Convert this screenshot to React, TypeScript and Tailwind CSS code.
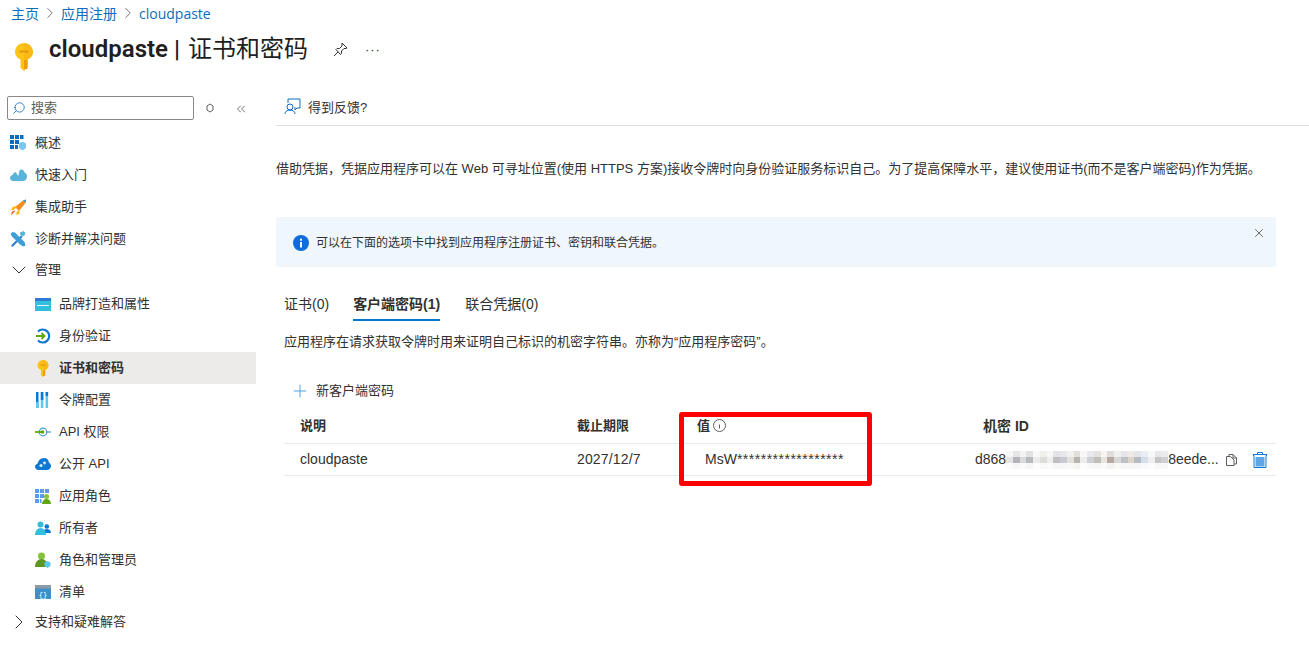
import React from 'react';
import { ChevronDown, ChevronRight, ChevronsLeft, Plus, Search, X } from 'lucide-react';

const font = "font-['Liberation_Sans','Noto_Sans_CJK_SC',sans-serif]";

function Key({ w = 18, h = 28 }: { w?: number; h?: number }) {
  return (
    <svg width={w} height={h} viewBox="0 0 18 28">
      <path d="M9 0 C14 0 18 4 18 9 C18 12.500 15.800 15 12.500 16.500 V23.500 L9 28 L5.500 25 V16.500 C2.200 15 0 12.500 0 9 C0 4 4 0 9 0 Z" fill="#fcc419" />
      <path d="M9 0 C14 0 18 4 18 9 C18 12.500 15.800 15 12.500 16.500 V23.500 L9 28 V0 Z" fill="#f8ae12" opacity="0.5" />
      <rect x="4.500" y="7.500" width="9" height="2" fill="#e59a0c" />
      <rect x="9" y="17" width="3.500" height="9" fill="#ee9b0e" />
    </svg>
  );
}

function NavIcon({ name }: { name: string }) {
  if (name === 'grid')
    return (
      <svg width="16" height="16" viewBox="0 0 16 16">
        <path d="M0 0h4v4H0zM5 0h4v4H5zM10 0h3.500v4H10zM0 5h4v4H0zM5 5h4v4H5zM0 10h4v4H0zM5 10h3v4H5z" fill="#0f6cbd" />
        <path d="M9 8.500l3.500-2 3.500 2v4.500l-3.500 2.500L9 13z" fill="#83c4ea" />
      </svg>
    );
  if (name === 'cloud')
    return (
      <svg width="17" height="12" viewBox="0 0 17 12">
        <path d="M3.500 12C1.500 12 0 10.700 0 9c0-1.600 1.200-2.800 2.800-3C3.200 4 4.500 3 6 3.500L8.200 7l1.500-6c2-1.200 4.300-.2 4.800 2.500 1.500.5 2.500 2 2.500 3.800C17 10 15.500 12 13.500 12z" fill="#59b4d9" />
      </svg>
    );
  if (name === 'rocket')
    return (
      <svg width="17" height="17" viewBox="0 0 17 17">
        <path d="M5 8L13 1.500 16 0.500 15.500 4 9 12z" fill="#f78d1e" />
        <path d="M13 1.500 16 .5 15.500 4z" fill="#3e94d6" />
        <path d="M3 7.500h4L4 11H1zM9.500 10.500v4L6.500 16.500V13z" fill="#fcb913" />
        <path d="M5.500 11.500L1 16.500l1-4z" fill="#f05a28" />
      </svg>
    );
  if (name === 'tools')
    return (
      <svg width="16" height="16" viewBox="0 0 16 16">
        <path d="M1 14.500L11 4.500l1.500 1.500L2.500 16z" fill="#2b7cd3" />
        <path d="M10 1.500L13.500 0 15.500 2 14.500 4.500 12 5.500 10.500 4z" fill="#59b4d9" />
        <path d="M0.500 3L2.500 1 5 1.500 14.500 11l1 3.500-2 1-3-1.500L2 5.500z" fill="#3d9fd8" />
      </svg>
    );
  if (name === 'brand')
    return (
      <svg width="16" height="13" viewBox="0 0 16 13">
        <rect width="16" height="13" fill="#32bedd" />
        <rect width="16" height="3" fill="#2b7cd3" />
        <rect x="2" y="7" width="12" height="1" fill="#e5f6fb" />
      </svg>
    );
  if (name === 'auth')
    return (
      <svg width="16" height="16" viewBox="0 0 16 16" fill="none">
        <path d="M3 3.500A6.500 6.500 0 1 1 3 12.500" stroke="#0f78d4" strokeWidth="2.200" />
        <path d="M1 8h8M6.500 5l3 3-3 3" stroke="#5ea60b" strokeWidth="1.800" />
      </svg>
    );
  if (name === 'key') return <span className="pl-[2px]"><Key w={12} h={17} /></span>;
  if (name === 'bars')
    return (
      <svg width="14" height="16" viewBox="0 0 14 16">
        <rect x="1" width="2.500" height="16" fill="#0f78d4" />
        <rect x="1" y="10" width="2.500" height="6" fill="#5cc8ec" />
        <rect x="5.800" width="2.500" height="16" fill="#5cc8ec" />
        <rect x="5.800" width="2.500" height="8" fill="#0f78d4" />
        <rect x="10.600" width="2.500" height="16" fill="#5cc8ec" />
        <rect x="10.600" width="2.500" height="4" fill="#0f78d4" />
      </svg>
    );
  if (name === 'api')
    return (
      <svg width="16" height="10" viewBox="0 0 16 10" fill="none">
        <circle cx="8" cy="5" r="3.800" stroke="#3d9fd8" strokeWidth="1.200" />
        <path d="M11 5h5" stroke="#3d9fd8" strokeWidth="1.200" />
        <path d="M0 5h8" stroke="#5ea60b" strokeWidth="1.800" />
        <circle cx="7.500" cy="5" r="1.800" fill="#5ea60b" />
      </svg>
    );
  if (name === 'expose')
    return (
      <svg width="16" height="12" viewBox="0 0 16 12">
        <path d="M3.500 12C1.500 12 0 10.600 0 8.800 0 7.300 1 6.100 2.500 5.800 3 3 5.500 0 9 0c3 0 4.800 2 5 4.800 1.300.5 2 1.800 2 3.200 0 2.200-1.700 4-4 4z" fill="#0f78d4" />
        <circle cx="6" cy="7.500" r="1.600" fill="#d5eefa" />
        <circle cx="9.500" cy="5" r="1.400" fill="#d5eefa" />
      </svg>
    );
  if (name === 'roles')
    return (
      <svg width="16" height="15" viewBox="0 0 16 15">
        <path d="M0 0h4v4H0zM5 0h4v4H5zM10 0h4v4h-4zM0 5h4v4H0zM5 5h4v4H5zM0 10h4v4H0zM5 10h1.500v4H5z" fill="#5a9bed" />
        <circle cx="11.500" cy="7.500" r="2.500" fill="#86c33a" />
        <path d="M7 15c0-3 2-5 4.500-5s4.500 2 4.500 5z" fill="#5ea60b" />
      </svg>
    );
  if (name === 'owners')
    return (
      <svg width="16" height="14" viewBox="0 0 16 14">
        <circle cx="11.800" cy="5.500" r="2.300" fill="#0f78d4" />
        <path d="M8 12c0-2.500 1.700-4 3.800-4s4.200 1.500 4.200 4z" fill="#0f78d4" />
        <circle cx="5.500" cy="3.500" r="3" fill="#32bedd" />
        <path d="M0 14c0-4 2.500-7 5.500-7s5.500 3 5.500 7z" fill="#32bedd" />
      </svg>
    );
  if (name === 'admins')
    return (
      <svg width="16" height="16" viewBox="0 0 16 16">
        <circle cx="6.500" cy="4" r="3.500" fill="#86c33a" />
        <path d="M0 15c0-5 3-8 6.500-8s6.500 3 6.500 8z" fill="#5e9624" />
        <path d="M9.500 10.500l3-1.500 3 1.500v3.500l-3 2-3-2z" fill="#5cc8ec" />
      </svg>
    );
  if (name === 'manifest')
    return (
      <svg width="16" height="14" viewBox="0 0 16 14">
        <rect width="16" height="14" fill="#3d8fc9" />
        <rect width="16" height="3.500" fill="#8c9aa5" />
        <text x="8" y="11.500" textAnchor="middle" fontSize="7" fill="#ffffff" fontFamily="Liberation Mono">{'{}'}</text>
      </svg>
    );
  return null;
}

const navTop = [
  { label: '概述', icon: 'grid' },
  { label: '快速入门', icon: 'cloud' },
  { label: '集成助手', icon: 'rocket' },
  { label: '诊断并解决问题', icon: 'tools' },
];

const navSub = [
  { label: '品牌打造和属性', icon: 'brand' },
  { label: '身份验证', icon: 'auth' },
  { label: '证书和密码', icon: 'key', active: true },
  { label: '令牌配置', icon: 'bars' },
  { label: 'API 权限', icon: 'api' },
  { label: '公开 API', icon: 'expose' },
  { label: '应用角色', icon: 'roles' },
  { label: '所有者', icon: 'owners' },
  { label: '角色和管理员', icon: 'admins' },
  { label: '清单', icon: 'manifest' },
];

const blurMid = ['#e4e4e6', '#b4b5bc', '#dadada', '#b9babc', '#ebebe9', '#dcdcd8', '#eeeeee', '#c0bfc2', '#c9cad0', '#e2e1dd', '#b7b4ae', '#ececec', '#cfd0d5', '#c1bdb8', '#e8e5df', '#b6a9a4', '#d8d8d4', '#bfc0c6', '#ddd5ca', '#b7bac0', '#d5dfea', '#eeeeee', '#c4c4c7', '#cfcfd3'];
const blurTop = ['#f6f6f6', '#e6e6e9', '#f3f3f3', '#e2e2e5', '#f8f8f8', '#efefec', '#f7f7f7', '#e4e4e7', '#e8e8ec', '#f1f0ee', '#e1e0dc', '#f8f8f8', '#e8e9ec', '#e4e2df', '#f6f4f1', '#e2dcda', '#f0f0ee', '#e5e6e9', '#efeae4', '#e3e5e9', '#e9eef4', '#f8f8f8', '#e6e6e8', '#ebebee'];
const blurEdge = ['#fbfbfb', '#f6f6f8', '#fafafa', '#f5f5f6', '#fcfcfc', '#f9f9f8', '#fbfbfb', '#f6f6f7', '#f7f7f9', '#faf9f8', '#f5f5f3', '#fcfcfc', '#f7f8f9', '#f6f6f4', '#fbfafa', '#f5f3f2', '#f9f9f8', '#f6f6f8', '#f9f7f5', '#f6f6f8', '#f7f9fb', '#fcfcfc', '#f7f7f8', '#f8f8fa'];

export default function App() {
  return (
    <div className={`${font} relative h-[664px] w-[1309px] overflow-hidden bg-white text-[#323130]`}>
      <div className="flex h-[26px] items-center gap-[2px] pl-[11px] font-['Open_Sans','Noto_Sans_CJK_SC',sans-serif] text-[14px] text-[#0f6cbd]">
        <span>主页</span>
        <ChevronRight size={18} strokeWidth={1.2} className="text-[#666]" />
        <span>应用注册</span>
        <ChevronRight size={18} strokeWidth={1.2} className="text-[#666]" />
        <span>cloudpaste</span>
      </div>

      <div className="mt-[2px] flex h-[42px] items-center pl-[15px]">
        <span className="mt-[15px] shrink-0"><Key /></span>
        <h1 className="ml-[16px] font-['Roboto','Noto_Sans_CJK_SC',sans-serif] text-[24px] leading-8 font-semibold text-[#201f1e]">cloudpaste | <span className="ml-[2px] font-normal">证书和密码</span></h1>
        <svg className="ml-[25px]" width="15" height="15" viewBox="0 0 15 15" fill="none" stroke="#323130">
          <path d="M9 1l5 5-1 .5-2 0-2.500 2.500 0 2.500-1 1L3 7.500l1-1 2.500 0L9 4l0-2zM5 10l-4 4" />
        </svg>
        <span className="ml-[17px] text-[13px] leading-none tracking-[1px]">···</span>
      </div>

      <div className="mt-[26px] flex">
        <aside className="w-[256px] shrink-0">
          <div className="flex h-[30px] items-start pl-[7px]">
            <div className="flex h-[24px] w-[187px] items-center gap-[5px] rounded-[2px] border border-[#8a8886] pl-1 text-[13px] text-[#605e5c]">
              <Search size={14} strokeWidth={1.4} className="-scale-x-100 text-[#0f6cbd]" />
              <span>搜索</span>
            </div>
            <svg className="mt-[7px] ml-[12px]" width="8" height="10" viewBox="0 0 8 10" fill="none" stroke="#605e5c">
              <path d="M4 1l3 2v4l-3 2-3-2V3z" />
            </svg>
            <ChevronsLeft size={14} strokeWidth={1.5} className="mt-[6px] ml-[20px] text-[#605e5c]" />
          </div>
          <nav className="mt-[1px] text-[13px]">
            {navTop.map((n) => (
              <div key={n.label} className="flex h-8 items-center pl-[10px]">
                <span className="flex w-[25px] items-center"><NavIcon name={n.icon} /></span>
                <span>{n.label}</span>
              </div>
            ))}
            <div className="flex h-[29px] items-center pt-[1px] pl-[7px]">
              <span className="w-[28px]"><ChevronDown size={24} strokeWidth={1} /></span>
              <span>管理</span>
            </div>
            <div className="h-[4px]" />
            {navSub.map((n) => (
              <div key={n.label} className={`flex h-8 items-center pl-[35px] ${n.active ? 'bg-[#edebe9] font-semibold' : ''}`}>
                <span className="flex w-[24px] items-center"><NavIcon name={n.icon} /></span>
                <span>{n.label}</span>
              </div>
            ))}
            <div className="flex h-[28px] items-center pl-[7px]">
              <span className="w-[28px]"><ChevronRight size={24} strokeWidth={1} /></span>
              <span>支持和疑难解答</span>
            </div>
          </nav>
        </aside>

        <main className="ml-[20px] min-w-0 flex-1">
          <div className="flex h-[30px] items-start gap-[7px] border-b border-[#e1dfdd] pl-[8px] text-[13px]">
            <svg className="mt-[2px]" width="17" height="17" viewBox="0 0 17 17" fill="none" stroke="#0f6cbd">
              <path d="M4 5V1h12v9h-3l-2 2V9" />
              <circle cx="6" cy="9" r="3" />
              <path d="M1 16c0-2.500 2-4 5-4s5 1.500 5 4" />
            </svg>
            <span className="pt-[2px]">得到反馈?</span>
          </div>

          <p className="mt-[34px] text-[13px] leading-[18px]">借助凭据，凭据应用程序可以在 Web 可寻址位置(使用 HTTPS 方案)接收令牌时向身份验证服务标识自己。为了提高保障水平，建议使用证书(而不是客户端密码)作为凭据。</p>

          <div className="relative mt-[39px] flex h-[50px] w-[1000px] items-center gap-[7px] rounded-[2px] bg-[#eff6fc] pt-[1px] pl-[17px] text-[12px]">
            <svg width="16" height="16" viewBox="0 0 16 16">
              <circle cx="8" cy="8" r="8" fill="#0f6cdb" />
              <rect x="7" y="7" width="2" height="5.500" fill="#fff" />
              <rect x="7" y="3.700" width="2" height="2" fill="#fff" />
            </svg>
            <span>可以在下面的选项卡中找到应用程序注册证书、密钥和联合凭据。</span>
            <X size={14} strokeWidth={1.2} className="absolute top-[9px] right-[10px]" />
          </div>

          <div className="mt-[26px] ml-[8px] flex h-[28px] gap-[24px] text-[14px]">
            <span className="pt-[1px]">证书(0)</span>
            <span className="border-b-2 border-[#0078d4] pt-[1px] font-semibold">客户端密码(1)</span>
            <span className="ml-[1px] pt-[1px]">联合凭据(0)</span>
          </div>

          <p className="mt-[12px] ml-[8px] text-[13px] leading-[18px]">应用程序在请求获取令牌时用来证明自己标识的机密字符串。亦称为“应用程序密码”。</p>

          <div className="mt-[28px] ml-[14px] flex h-[24px] items-center gap-[6px] text-[13px]">
            <Plus size={20} strokeWidth={1.2} className="text-[#4fa3e3]" />
            <span>新客户端密码</span>
          </div>

          <div className="mt-[6px] ml-[8px] w-[992px]">
            <div className="flex h-[35px] items-center border-b border-[#e9e9e9] text-[13px] font-semibold">
              <span className="w-[293px] pl-[16px]">说明</span>
              <span className="w-[120px]">截止期限</span>
              <span className="flex w-[286px] items-center">
                值
                <svg className="-mt-[2px] ml-[3px]" width="13" height="13" viewBox="0 0 13 13" fill="none" stroke="#605e5c">
                  <circle cx="6.500" cy="6.500" r="6" />
                  <path d="M6.500 5.500v4" />
                </svg>
              </span>
              <span className="text-[14px]">机密 ID</span>
            </div>
            <div className="flex h-[32px] items-center border-b border-[#e9e9e9] text-[14px]">
              <span className="w-[293px] pl-[16px]">cloudpaste</span>
              <span className="w-[128px] tracking-[0.15px]">2027/12/7</span>
              <span className="w-[270px]">MsW<span className="tracking-[0.5px]">******************</span></span>
              <span className="flex w-[243px] items-center">
                d868
                <span className="flex h-[18px] flex-col">
                  {[blurTop, blurMid, blurEdge].map((row, r) => (
                    <span key={r} className="flex h-[6px]">
                      {row.map((c, i) => (
                        <span key={i} className="h-full w-[6.75px]" style={{ background: c }} />
                      ))}
                    </span>
                  ))}
                </span>
                8eede...
              </span>
              <svg className="ml-[8px]" width="11" height="12" viewBox="0 0 11 12" fill="none" stroke="#605e5c">
                <path d="M3 2.500V.5h4l3.500 3.500V10H8M7 .5V4h3.500M.5 2.500h4L8 6v5.500H.5z" />
              </svg>
              <svg className="ml-[16px]" width="14" height="16" viewBox="0 0 14 16">
                <path d="M0 2.500h14v1H13V15.500H1V3.500H0zM4.500 2.500V.5h5v2" fill="none" stroke="#0f78d4" />
                <rect x="2.500" y="5" width="9" height="9.500" fill="#5ea6e5" />
              </svg>
            </div>
          </div>
        </main>
      </div>

      <div className="absolute top-[412px] left-[679px] h-[74px] w-[193px] rounded-[3px] border-[5px] border-[#fe0000]" />
    </div>
  );
}
